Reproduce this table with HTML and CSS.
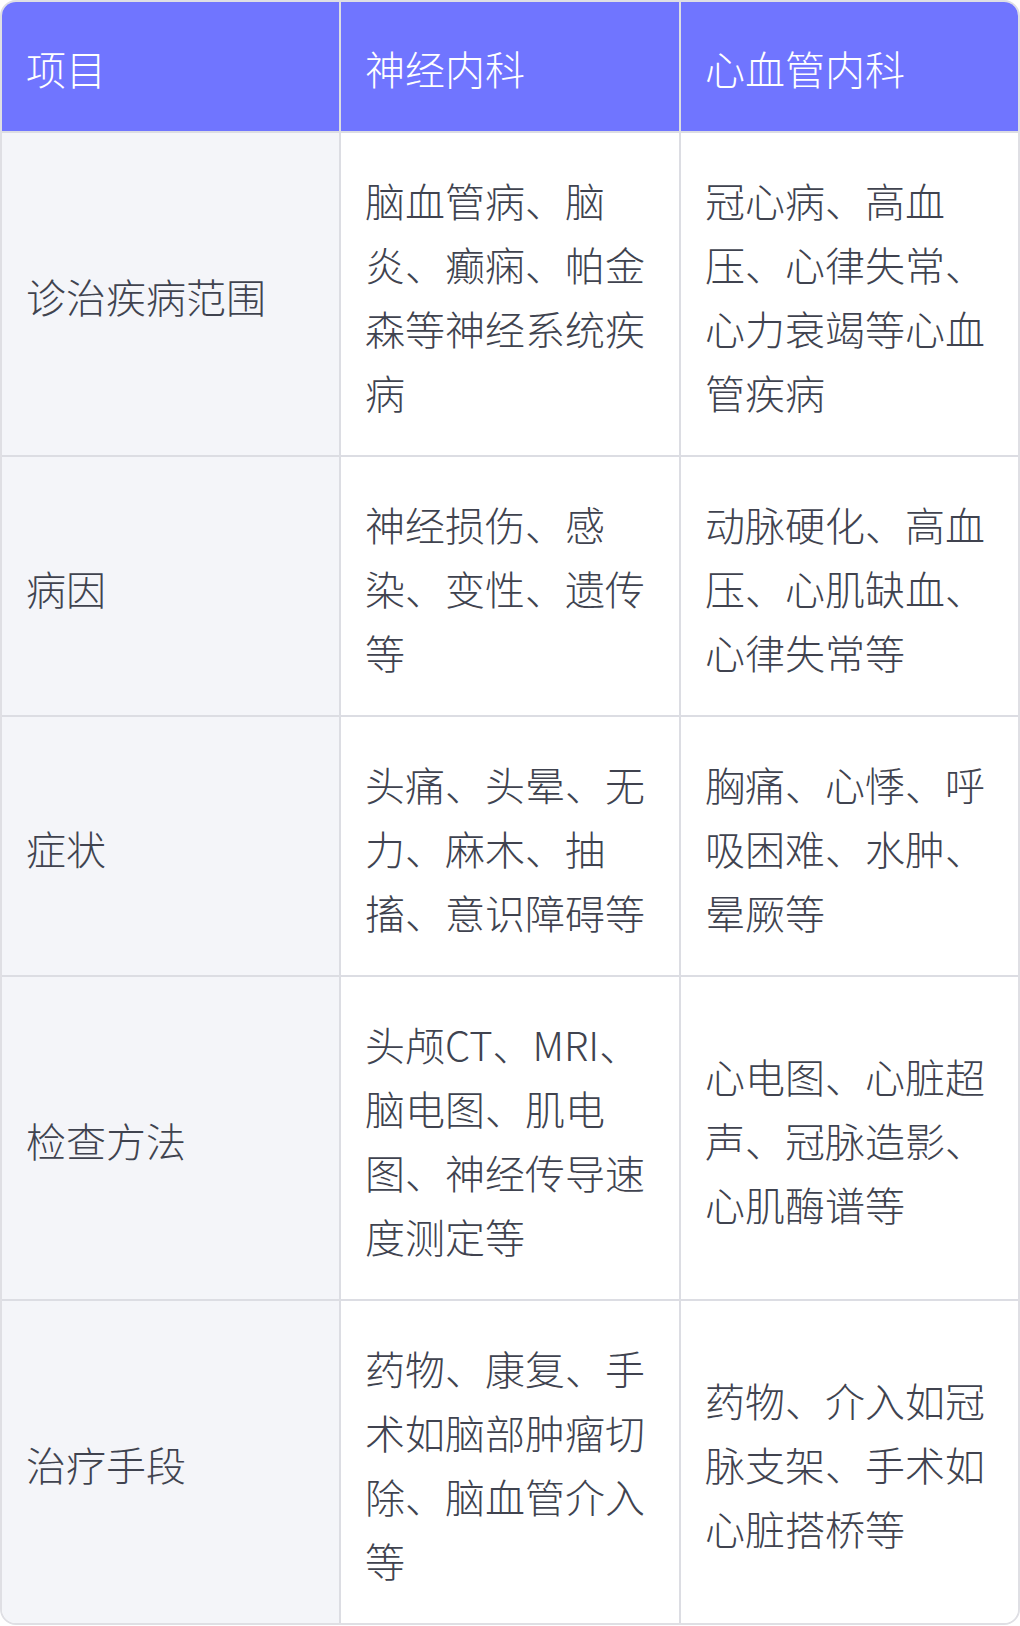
FILE: index.html
```html
<!DOCTYPE html>
<html lang="zh-CN">
<head>
<meta charset="utf-8">
<title>神经内科与心血管内科对比</title>
<link rel="stylesheet" href="styles.css">
</head>
<body>
<div class="card">
  <table class="compare">
    <colgroup>
      <col class="c1"><col class="c2"><col class="c3">
    </colgroup>
    <thead>
      <tr>
        <th>项目</th>
        <th>神经内科</th>
        <th>心血管内科</th>
      </tr>
    </thead>
    <tbody>
      <tr>
        <td class="label">诊治疾病范围</td>
        <td>脑血管病、脑炎、癫痫、帕金森等神经系统疾病</td>
        <td>冠心病、高血压、心律失常、心力衰竭等心血管疾病</td>
      </tr>
      <tr>
        <td class="label">病因</td>
        <td>神经损伤、感染、变性、遗传等</td>
        <td>动脉硬化、高血压、心肌缺血、心律失常等</td>
      </tr>
      <tr>
        <td class="label">症状</td>
        <td>头痛、头晕、无力、麻木、抽搐、意识障碍等</td>
        <td>胸痛、心悸、呼吸困难、水肿、晕厥等</td>
      </tr>
      <tr>
        <td class="label">检查方法</td>
        <td>头颅CT、MRI、脑电图、肌电图、神经传导速度测定等</td>
        <td>心电图、心脏超声、冠脉造影、心肌酶谱等</td>
      </tr>
      <tr>
        <td class="label">治疗手段</td>
        <td>药物、康复、手术如脑部肿瘤切除、脑血管介入等</td>
        <td>药物、介入如冠脉支架、手术如心脏搭桥等</td>
      </tr>
    </tbody>
  </table>
</div>
</body>
</html>
```

FILE: styles.css
```css
html, body {
  margin: 0;
  padding: 0;
  background: #ffffff;
}

body {
  font-family: "Noto Sans CJK SC", "Noto Sans", sans-serif;
  font-weight: 300;
  color: #40434f;
}

.card {
  width: 1020px;
  box-sizing: border-box;
  border: 2px solid #dfdfe4;
  border-radius: 16px;
  overflow: hidden;
}

.compare {
  width: 100%;
  table-layout: fixed;
  border-collapse: collapse;
  border-spacing: 0;
}

.c1 { width: 338px; }
.c2 { width: 340px; }
.c3 { width: 338px; }

.compare th,
.compare td {
  font-size: 40px;
  line-height: 64px;
  text-align: left;
  vertical-align: middle;
  padding: 35px 24px 31px;
  border-right: 2px solid #dcdde3;
  border-bottom: 2px solid #dcdde3;
  word-break: normal;
  line-break: strict;
}

.compare th:last-child,
.compare td:last-child {
  border-right: none;
}

.compare tbody tr:last-child td {
  border-bottom: none;
}

.compare th {
  background: #7075ff;
  color: #ffffff;
  font-weight: 300;
  padding-top: 34px;
  padding-bottom: 31px;
}

.compare td {
  background: #ffffff;
}

.compare td.label {
  background: #f4f5f9;
}
```
